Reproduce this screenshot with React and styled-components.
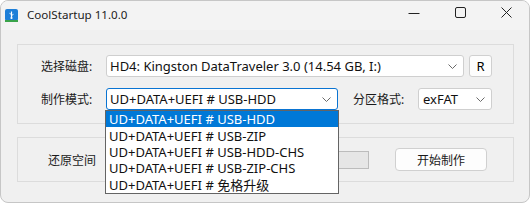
import styled, { createGlobalStyle } from "styled-components";

const GlobalStyle = createGlobalStyle`
  html, body {
    margin: 0;
    padding: 0;
    background: #ffffff;
  }
  body {
    font-family: "Noto Sans", "Noto Sans CJK SC", sans-serif;
    color: #000;
  }
`;

const Window = styled.div`
  width: 530px;
  height: 203px;
  box-sizing: border-box;
  border: 1px solid #c6c6c6;
  border-radius: 8px;
  background: #f0f0f0;
  overflow: hidden;
  display: flex;
  flex-direction: column;
`;

const TitleBar = styled.div`
  height: 29px;
  flex: none;
  display: flex;
  align-items: center;
  background: #f3f3f3;
  padding-left: 4px;
`;

const AppIcon = styled.svg`
  width: 13px;
  height: 13px;
  margin-top: -1px;
`;

const Title = styled.span`
  margin-left: 9px;
  font-size: 11.6px;
  color: #1b1b1b;
  margin-top: -2px;
`;

const Controls = styled.div`
  margin-left: auto;
  display: flex;
  height: 100%;
`;

const Ctrl = styled.div`
  width: 46px;
  height: 100%;
  display: flex;
  align-items: center;
  justify-content: center;
  margin-top: -3px;
`;

const Body = styled.div`
  flex: 1;
  padding: 14px 16px 0 16px;
  display: flex;
  flex-direction: column;
  gap: 13px;
`;

const Group = styled.div`
  position: relative;
  width: 497px;
  box-sizing: border-box;
  border: 1px solid #dcdcdc;
  padding: ${(p) => p.$pad};
  display: flex;
  flex-direction: column;
  gap: 11px;
`;

const Row = styled.div`
  display: flex;
  align-items: center;
  height: ${(p) => p.$h || 22}px;
`;

const Label = styled.span`
  font-size: 12px;
  width: ${(p) => p.$w}px;
  flex: none;
  margin-left: ${(p) => p.$ml || 0}px;
  color: #1a1a1a;
  white-space: nowrap;
`;

const Select = styled.div`
  position: relative;
  flex: none;
  width: ${(p) => p.$w}px;
  height: 22px;
  box-sizing: border-box;
  border: 1px solid ${(p) => (p.$focus ? "#0a74d2" : "#cfcfcf")};
  border-radius: 3px;
  background: #fff;
  display: flex;
  align-items: center;
  padding-left: ${(p) => p.$pl || 3}px;
  font-size: 13px;
  white-space: nowrap;
  color: #111;
`;

const Chevron = styled.svg`
  position: absolute;
  right: 6px;
  top: 8px;
  width: 9px;
  height: 5px;
`;

const SmallButton = styled.div`
  flex: none;
  width: 23px;
  height: 22px;
  margin-left: 5px;
  box-sizing: border-box;
  border: 1px solid #d0d0d0;
  border-radius: 3px;
  background: #fdfdfd;
  display: flex;
  align-items: center;
  justify-content: center;
  font-size: 13px;
`;

const Dropdown = styled.div`
  position: absolute;
  left: 87px;
  top: 65px;
  width: 234px;
  box-sizing: border-box;
  border: 1px solid #646464;
  background: #fff;
  z-index: 5;
`;

const Item = styled.div`
  height: 16.4px;
  display: flex;
  align-items: center;
  padding-left: 3px;
  font-size: 13px;
  white-space: nowrap;
  background: ${(p) => (p.$active ? "#0078d7" : "#fff")};
  color: ${(p) => (p.$active ? "#fff" : "#111")};
`;

const Progress = styled.div`
  flex: none;
  width: 260px;
  height: 18px;
  box-sizing: border-box;
  margin-left: 6px;
  border: 1px solid #bcbcbc;
  background: #e6e6e6;
`;

const StartButton = styled.div`
  flex: none;
  width: 92px;
  height: 23px;
  margin-left: 26px;
  box-sizing: border-box;
  border: 1px solid #d0d0d0;
  border-radius: 4px;
  background: #fdfdfd;
  display: flex;
  align-items: center;
  justify-content: center;
  font-size: 12px;
  color: #1a1a1a;
`;

const ChevronIcon = () => (
  <Chevron viewBox="0 0 9 5">
    <path d="M0.5 0.5 L4.5 4.5 L8.5 0.5" fill="none" stroke="#6a6a6a" strokeWidth="1" />
  </Chevron>
);

const items = [
  "UD+DATA+UEFI # USB-HDD",
  "UD+DATA+UEFI # USB-ZIP",
  "UD+DATA+UEFI # USB-HDD-CHS",
  "UD+DATA+UEFI # USB-ZIP-CHS",
  "UD+DATA+UEFI # 免格升级",
];

export default function App() {
  return (
    <>
      <GlobalStyle />
      <Window>
        <TitleBar>
          <AppIcon viewBox="0 0 13 13">
            <rect x="0" y="0" width="13" height="12" rx="2" fill="#1e7fd8" />
            <rect x="0" y="11" width="13" height="2" fill="#3aa34a" />
            <path d="M6.5 2.5 V8.5" stroke="#fff" strokeWidth="1.2" />
            <circle cx="6.5" cy="9" r="1.1" fill="#fff" />
            <path d="M6.5 5.5 L4.5 4.3 M6.5 6.5 L8.5 5.3" stroke="#fff" strokeWidth="0.9" />
          </AppIcon>
          <Title>CoolStartup 11.0.0</Title>
          <Controls>
            <Ctrl>
              <svg width="12" height="12" viewBox="0 0 12 12">
                <path d="M0.5 6.5 H11.5" stroke="#222" strokeWidth="1" />
              </svg>
            </Ctrl>
            <Ctrl>
              <svg width="11" height="11" viewBox="0 0 11 11">
                <rect x="0.5" y="0.5" width="10" height="10" rx="1.5" fill="none" stroke="#222" strokeWidth="1" />
              </svg>
            </Ctrl>
            <Ctrl>
              <svg width="11" height="11" viewBox="0 0 11 11">
                <path d="M0.5 0.5 L10.5 10.5 M10.5 0.5 L0.5 10.5" stroke="#222" strokeWidth="1" />
              </svg>
            </Ctrl>
          </Controls>
        </TitleBar>
        <Body>
          <Group $pad="10px 0 13px 0">
            <Row>
              <Label $w={65} $ml={23}>选择磁盘:</Label>
              <Select $w={358}>
                HD4: Kingston DataTraveler 3.0 (14.54 GB, I:)
                <ChevronIcon />
              </Select>
              <SmallButton>R</SmallButton>
            </Row>
            <Row>
              <Label $w={65} $ml={23}>制作模式:</Label>
              <Select $w={232} $focus>
                UD+DATA+UEFI # USB-HDD
                <ChevronIcon />
              </Select>
              <Label $w={65} $ml={15}>分区格式:</Label>
              <Select $w={74} $pl={4}>
                exFAT
                <ChevronIcon />
              </Select>
            </Row>
            <Dropdown>
              {items.map((t, i) => (
                <Item key={t} $active={i === 0}>
                  {t}
                </Item>
              ))}
            </Dropdown>
          </Group>
          <Group $pad="0">
            <Row $h={43}>
              <Label $w={55} $ml={30}>还原空间</Label>
              <Progress />
              <StartButton>开始制作</StartButton>
            </Row>
          </Group>
        </Body>
      </Window>
    </>
  );
}
